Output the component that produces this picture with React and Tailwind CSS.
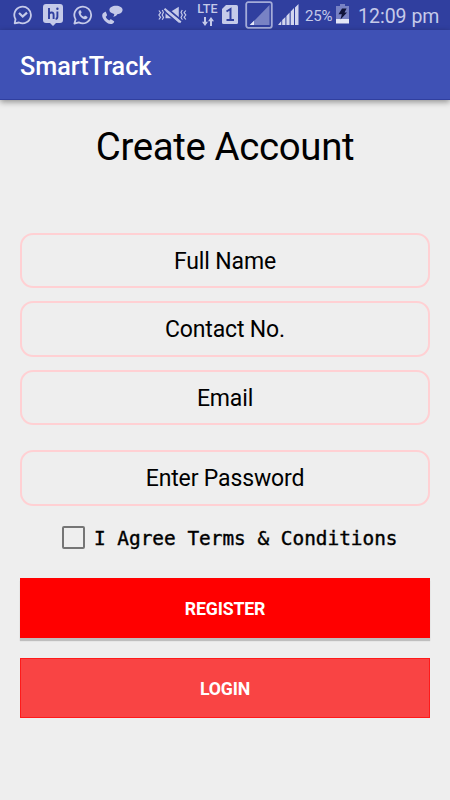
import { useState } from 'react';
import { clsx } from 'clsx';

const fields = [
  { name: 'fullName', label: 'Full Name', type: 'text', gap: 'mt-0' },
  { name: 'contact', label: 'Contact No.', type: 'tel', gap: 'mt-[13px]' },
  { name: 'email', label: 'Email', type: 'email', gap: 'mt-[13px]' },
  { name: 'password', label: 'Enter Password', type: 'password', gap: 'mt-[25px]' },
];

function MessengerIcon() {
  return (
    <svg width="20" height="20" viewBox="0 0 20 20" fill="none" stroke="#c5cae9" strokeWidth="1.8">
      <path d="M1.7 18.3l.8-4A8.3 8.3 0 1 1 6 17.5z" strokeLinejoin="round" />
      <path d="M6 8l3.7 3.5L14 7.6" strokeWidth="2.2" />
    </svg>
  );
}

function HikeIcon() {
  return (
    <svg width="20" height="22" viewBox="0 0 20 22">
      <path d="M3 0h14a3 3 0 0 1 3 3v13a3 3 0 0 1-3 3h-4l-3 3-3-3H3a3 3 0 0 1-3-3V3a3 3 0 0 1 3-3z" fill="#c5cae9" />
      <path
        d="M6 4v11M6 10c1-2.2 4.6-2.2 4.6.7V15M14.4 7.5v5c0 1.6-.6 2.400-1.800 2.400"
        fill="none"
        stroke="#303f9f"
        strokeWidth="1.9"
      />
      <circle cx="14.4" cy="4.8" r="1.200" fill="#303f9f" />
    </svg>
  );
}

function WhatsAppIcon() {
  return (
    <svg width="20" height="20" viewBox="0 0 20 20">
      <path
        d="M1.4 18.6l1.2-4.2A8.4 8.4 0 1 1 5.8 17.4z"
        fill="none"
        stroke="#c5cae9"
        strokeWidth="1.8"
        strokeLinejoin="round"
      />
      <path
        d="M6.8 5.3c-1 .5-1.5 1.6-1.2 2.9.6 2.8 3.2 5.4 6 6 1.3.3 2.5-.3 2.9-1.4.2-.6.1-.9-.3-1.1l-1.7-.9c-.4-.2-.7 0-.9.3l-.6.7c-1.5-.5-2.7-1.7-3.3-3.1l.7-.8c.2-.3.2-.5.1-.8l-.7-1.5c-.2-.4-.6-.5-1-.3z"
        fill="#c5cae9"
      />
    </svg>
  );
}

function CallIcon() {
  return (
    <svg width="21" height="20" viewBox="0 0 21 20" fill="#c5cae9">
      <path d="M2.9 7L1.300 8.100C0 9.200-.1 11 .8 13c1.500 3.300 4.600 5.700 7.600 6 1.700.2 2.900-.4 3.600-1.700.3-.5.2-1-.3-1.300l-2.300-1.600c-.5-.3-.9-.3-1.300.2l-.7.900C5.600 14.700 4.400 13.400 3.700 11.700l.9-.8c.4-.4.5-.8.3-1.300L4 7.300c-.2-.5-.6-.6-1.100-.3z" />
      <path d="M14 .7c3.700 0 6.600 1.700 6.600 4.300 0 2.300-2.300 4-5.300 4.300-.7 1.600-2.300 2.400-4.300 2.500 1-.9 1.300-1.900 1.200-2.900C9.500 8.400 7.400 7 7.400 5c0-2.600 2.900-4.300 6.600-4.300z" />
    </svg>
  );
}

function MuteIcon() {
  return (
    <svg width="29" height="18" viewBox="0 0 29 18" fill="none" stroke="#c5cae9">
      <path
        d="M.9 4.500l1.700 2.200L.9 9l1.700 2.200L.9 13.500M4.200 4l1.300 2.200L4.200 9l1.300 2.500-1.300 2.300M24.300 4L23 6.200 24.300 9 23 11.500l1.300 2.300M27.800 4.500l-1.700 2.200L27.800 9l-1.700 2.200 1.700 2.300"
        strokeWidth="1.200"
      />
      <path d="M7.500 5.200h6L20.800.8v16.200l-7.300-4.800h-6z" fill="#c5cae9" stroke="none" />
      <path d="M7 .8l16 13.400" stroke="#303f9f" strokeWidth="2" />
      <path d="M6 5.200l14 11.800" stroke="#303f9f" strokeWidth="1.600" />
      <path d="M6.500 2.800l16.300 13.600" strokeWidth="2.100" />
    </svg>
  );
}

function DataArrows() {
  return (
    <svg width="12" height="9" viewBox="0 0 12 9" fill="#c5cae9">
      <path d="M2 0h2v4.800h2L3 9 0 4.800h2zM8 9h2V4.200h2L9 0 6 4.200h2z" />
    </svg>
  );
}

function SimIcon() {
  return (
    <svg width="16" height="19" viewBox="0 0 16 19">
      <path d="M4 0h10.500A1.500 1.500 0 0 1 16 1.500v16a1.500 1.500 0 0 1-1.500 1.500h-13A1.500 1.500 0 0 1 0 17.500V4z" fill="#c5cae9" />
      <path d="M4.500 6.500L8.500 4v11M4.500 15h7.500" fill="none" stroke="#303f9f" strokeWidth="2" />
    </svg>
  );
}

function EmptySignalIcon() {
  return (
    <svg width="28" height="28" viewBox="0 0 28 28">
      <rect x="1.200" y="1.200" width="25.600" height="25.600" rx="2" fill="none" stroke="#a4acd9" strokeWidth="1.800" />
      <path d="M5 24L24.500 4v20z" fill="#7882c4" />
      <path d="M4.700 24L9 19.700V24z" fill="#e4e7f7" />
    </svg>
  );
}

function SignalIcon() {
  return (
    <svg width="21" height="21" viewBox="0 0 21 21" fill="#d2d6ee">
      <path d="M0 21l3.300-4v4zM4.200 16l3.200-3v8H4.200zM8.400 12l3.200-3.500V21H8.400zM12.700 7.500L16 4v17h-3.300zM17 3.500L20.500 0v21H17z" />
    </svg>
  );
}

function BatteryIcon() {
  return (
    <svg width="13" height="20" viewBox="0 0 13 20">
      <path d="M4 0h5v2h4v13H0V2h4z" fill="#7882c4" />
      <path d="M0 15h13v4.500H0z" fill="#e4e7f7" />
      <path d="M6 4.500h4.600L8.500 8.500H11L4.500 15.500l1.300-5.300H2.500z" fill="#10143a" />
    </svg>
  );
}

function StatusBar() {
  return (
    <div className="flex h-[30px] shrink-0 items-start bg-[#303f9f] text-[#c5cae9]">
      <div className="flex items-start gap-[10px] pt-[5px] pl-[13px]">
        <MessengerIcon />
        <div className="-mt-px">
          <HikeIcon />
        </div>
        <WhatsAppIcon />
        <div className="-ml-px">
          <CallIcon />
        </div>
      </div>
      <div className="mt-[6px] ml-[35px]">
        <MuteIcon />
      </div>
      <div className="mt-[3px] ml-[10px] flex w-[21px] flex-col items-center gap-[2px]">
        <span className="text-[12.500px] leading-[12px] font-medium tracking-[0.2px]">LTE</span>
        <DataArrows />
      </div>
      <div className="mt-[5px] ml-[4px]">
        <SimIcon />
      </div>
      <div className="mt-px ml-[7px]">
        <EmptySignalIcon />
      </div>
      <div className="mt-[4px] ml-[5px]">
        <SignalIcon />
      </div>
      <span className="mt-[6px] ml-[6px] w-[29px] text-[15px] leading-5 tracking-[-0.2px]">25%</span>
      <div className="mt-[4px] ml-[2px]">
        <BatteryIcon />
      </div>
      <span className="mt-[5px] ml-[9px] text-[19.500px] leading-6 whitespace-nowrap">12:09 pm</span>
    </div>
  );
}

export default function App() {
  const [values, setValues] = useState({});
  const [agreed, setAgreed] = useState(false);

  return (
    <div className="flex h-[800px] w-[450px] flex-col overflow-hidden bg-[#eeeeee] font-['Roboto',sans-serif]">
      <StatusBar />
      <header className="flex h-[70px] shrink-0 items-center border-b border-[#303f9f] bg-[#3f51b5] px-5 pt-[4px] shadow-[0_2px_6px_rgba(0,0,0,0.4)]">
        <h1 className="text-[25.200px] leading-8 font-medium text-white">SmartTrack</h1>
      </header>

      <main className="flex flex-col px-5">
        <h2 className="mt-[22px] text-center text-[38.400px] leading-[50px] tracking-[-0.35px] text-black">
          Create Account
        </h2>

        <form className="mt-[60.500px] flex flex-col" onSubmit={(e) => e.preventDefault()}>
          {fields.map((field) => (
            <input
              key={field.name}
              type={field.type}
              placeholder={field.label}
              aria-label={field.label}
              value={values[field.name] || ''}
              onChange={(e) => setValues({ ...values, [field.name]: e.target.value })}
              className={clsx(
                'h-[55.500px] rounded-[13px] border-2 border-[#ffd0d3] pt-[2px] text-center text-[23px] tracking-[-0.15px] text-black outline-none placeholder:text-black placeholder:opacity-100',
                field.gap
              )}
            />
          ))}

          <label className="mt-[20px] ml-[42px] flex h-6 items-center gap-[9px]">
            <input
              type="checkbox"
              checked={agreed}
              onChange={(e) => setAgreed(e.target.checked)}
              className="size-[23px] appearance-none rounded-[2px] border-[2.500px] border-[#757575] checked:bg-[#ff4081]"
            />
            <span className="pt-[2px] font-['DejaVu_Sans_Mono',monospace] text-[19.400px] whitespace-nowrap text-black [-webkit-text-stroke:0.4px_black]">
              I Agree Terms &amp; Conditions
            </span>
          </label>

          <button
            type="submit"
            className="mt-[28px] h-[60px] bg-[#ff0000] pt-[3px] text-[17.700px] font-bold tracking-[-0.15px] text-white shadow-[0_3px_1px_rgba(0,0,0,0.2)]"
          >
            REGISTER
          </button>
          <button
            type="button"
            className="mt-[20px] h-[60px] border border-[#ff1a1a] bg-[#f94444] pt-[3px] text-[17.700px] font-bold tracking-[-0.15px] text-white"
          >
            LOGIN
          </button>
        </form>
      </main>
    </div>
  );
}
